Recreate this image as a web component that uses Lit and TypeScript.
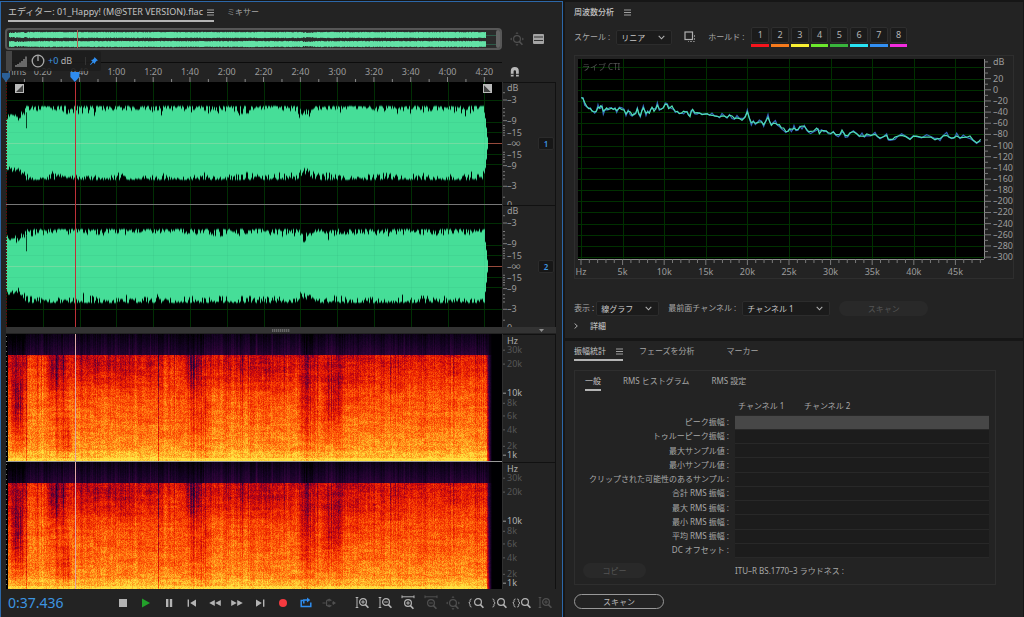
import { LitElement, html, svg, css } from "lit";
import { customElement, property } from "lit/decorators.js";
import { classMap } from "lit/directives/class-map.js";
import { styleMap } from "lit/directives/style-map.js";

type Painter = (c: CanvasRenderingContext2D, w: number, h: number) => void;

/* Repeatable noise, so that a redraw gives the same track. */
const noise = (a: number, b = 0): number => {
  let n = (Math.imul(a | 0, 374761393) + Math.imul(b | 0, 668265263)) | 0;
  n = Math.imul(n ^ (n >>> 13), 1274126177);
  return ((n ^ (n >>> 16)) >>> 0) / 4294967295;
};
const smooth = (x: number, seed: number): number => {
  const i = Math.floor(x);
  const f = x - i;
  const k = f * f * (3 - 2 * f);
  return noise(i, seed) * (1 - k) + noise(i + 1, seed) * k;
};
const bump = (x: number, from: number, to: number, soft = 3): number =>
  Math.max(0, Math.min(1, (x - from) / soft, (to - x) / soft));

const VIEW_SECONDS = 269.6;
const TRACK_END = 261.8;
const PLAYHEAD = 37.436;
const MINOR = 10;

/* ---------- waveform ---------- */

const envelope = (sec: number, seed: number): number => {
  const x = (sec / VIEW_SECONDS) * 496;
  const loose = 0.05 + 0.09 * smooth(x / 14, seed + 2);
  let a = 0.61 - loose * Math.pow(noise(Math.floor(x), seed), 2);
  if (noise(Math.floor(x), seed + 9) > 0.93) a -= 0.06;
  if (x < 19) a = 0.5 - 0.11 * noise(Math.floor(x), seed) + (x > 14 ? 0.05 : 0) - bump(x, 9, 15) * 0.05;
  a -= bump(x, 290, 310, 8) * (0.04 + 0.1 * noise(Math.floor(x), seed + 4));
  if (sec > TRACK_END - 1.6) a *= Math.max(0, (TRACK_END - sec) / 1.6) * 0.8;
  return a;
};

const LEVELS = [0, 0.175, 0.35, 0.7];

const paintWave: Painter = (c, w, h) => {
  c.fillStyle = "#000";
  c.fillRect(0, 0, w, h);
  const half = h / 2;
  for (let t = 0; t < 2; t++) {
    const mid = Math.round(half * t + half / 2);
    const px = (s: number) => Math.round((s / VIEW_SECONDS) * w);
    const grid = () => {
      for (let s = 0; s < VIEW_SECONDS; s += 20) c.fillRect(px(s), Math.round(half * t), 1, half);
      for (const l of LEVELS)
        for (const d of [-1, 1]) c.fillRect(0, mid + Math.round((d * l * half) / 2), w, 1);
    };
    c.fillStyle = "#002b00";
    grid();
    for (let x = 0; x < w; x++) {
      const s = (x / w) * VIEW_SECONDS;
      if (s > TRACK_END) break;
      const up = envelope(s, 11 + t) * (half / 2);
      const dn = envelope(s, 31 + t) * (half / 2);
      c.fillStyle = "#46de98";
      c.fillRect(x, mid - up, 1, up + dn);
      c.fillStyle = "rgba(0,60,35,0.45)";
      c.fillRect(x, mid - up - 1, 1, 2);
      c.fillRect(x, mid + dn - 1, 1, 2);
    }
    c.fillStyle = "rgba(20,110,60,0.06)";
    grid();
    c.fillStyle = "rgba(190,240,190,0.4)";
    c.fillRect(0, mid, px(TRACK_END), 1);
    c.fillStyle = "#984a3c";
    c.fillRect(px(TRACK_END), mid, w, 1);
    c.fillStyle = "#0b3f25";
    c.fillRect(20, mid - half * 0.25, 1, half * 0.13);
  }
  c.fillStyle = "#777";
  c.fillRect(0, Math.round(half) - 1, w, 1);
  c.fillStyle = "#c03038";
  c.fillRect(Math.round((PLAYHEAD / VIEW_SECONDS) * w), 0, 1, h);
  c.fillStyle = "#5a0c0c";
  for (let y = 0; y < h; y += 3) c.fillRect(0, y, 1, 2);
};

/* Fade-in and fade-out handle. */
const fadeHandle = (out: boolean) => html`<svg class="fade" viewBox="0 0 9 9">
  <rect width="9" height="9" fill="#b9b9b9" />
  <path d=${out ? "M1 1V8H8Z" : "M1 8V1H8Z"} fill=${out ? "#444" : "#b9b9b9"} />
  <path d=${out ? "M1 1H8V8Z" : "M1 8H8V1Z"} fill=${out ? "#b9b9b9" : "#444"} />
</svg>`;

const paintOverview: Painter = (c, w, h) => {
  for (let t = 0; t < 2; t++) {
    const mid = Math.round(h * (t ? 0.78 : 0.25));
    for (let x = 0; x < w; x++) {
      const s = (x / w) * VIEW_SECONDS;
      if (s > TRACK_END + 2) {
        c.fillStyle = "#2d5a48";
        c.fillRect(x, mid, 1, 1);
        continue;
      }
      const quiet = x < 18 || (x > 292 && x < 306);
      const a = quiet ? 2 + noise(x, t) : 2.6 + noise(x, t) * 0.6;
      c.fillStyle = "#63e2a6";
      c.fillRect(x, mid - a, 1, a * 2);
    }
  }
  c.fillStyle = "#b5604f";
  c.fillRect(Math.round((PLAYHEAD / VIEW_SECONDS) * w), 0, 1, h);
};

/* ---------- spectrogram ---------- */

const RAMP: [number, number, number, number][] = [
  [0, 0, 0, 2],
  [0.14, 20, 2, 34],
  [0.28, 52, 4, 62],
  [0.4, 122, 0, 44],
  [0.52, 196, 6, 14],
  [0.64, 240, 42, 0],
  [0.76, 255, 98, 10],
  [0.87, 255, 160, 32],
  [1, 255, 226, 64],
];
const ramp = (v: number): [number, number, number] => {
  const t = Math.max(0, Math.min(1, v));
  let i = 1;
  while (i < RAMP.length - 1 && RAMP[i][0] < t) i++;
  const a = RAMP[i - 1];
  const b = RAMP[i];
  const k = (t - a[0]) / (b[0] - a[0]);
  return [a[1] + (b[1] - a[1]) * k, a[2] + (b[2] - a[2]) * k, a[3] + (b[3] - a[3]) * k];
};

/* Quiet passages: from, to, depth, centre height, spread. */
const DIPS: [number, number, number, number, number][] = [
  [1, 20, 0.17, 0.42, 0.4],
  [6, 18, 0.1, 0.5, 0.25],
  [40, 62, 0.17, 0.1, 0.3],
  [46, 68, 0.12, 0.78, 0.24],
  [60, 135, 0.08, 0.12, 0.2],
  [135, 156, 0.06, 0.12, 0.2],
  [178, 198, 0.22, 0.08, 0.26],
  [180, 206, 0.1, 0.65, 0.4],
  [198, 290, 0.07, 0.12, 0.2],
  [290, 312, 0.15, 0.4, 0.5],
  [314, 337, 0.13, 0.45, 0.36],
  [318, 372, 0.06, 0.2, 0.35],
  [372, 400, 0.05, 0.15, 0.2],
];

const spectroPainter =
  (track: number): Painter =>
  (c, w, h) => {
    const img = c.createImageData(w, h);
    for (let px = 0; px < w; px++) {
      const x = (px / w) * 496;
      const u = Math.round(x);
      const col = (noise(u, 71) - 0.5) * 0.1 + (smooth(x / 5, 5) - 0.5) * 0.08;
      const streak = noise(u, 17) > 0.93 ? 0.07 : 0;
      for (let y = 0; y < h; y++) {
        const d = y / h;
        let v: number;
        const grain = noise(u * 3 + 1, y * 5 + track * 997) - 0.5;
        if (d < 0.163) {
          v = 0.08 + d * 0.9 + col * 0.9 + streak * 0.7 + grain * 0.04;
          v -= bump(x, 0, 20) * 0.1 + bump(x, 178, 200) * 0.07 + bump(x, 294, 308) * 0.1;
          v = Math.max(v, 0);
        } else {
          const e = (d - 0.163) / 0.837;
          v = 0.565 + 0.13 * Math.pow(Math.min(1, e * 2.5), 0.8) + 0.2 * e * e + (e > 0.9 ? 0.04 : 0);
          v += col * (1 - e * 0.5) - streak * (1 - e) * 1.4;
          v += grain * 0.15 + (smooth(y / 2.2, 40 + Math.floor(x / 22)) - 0.5) * 0.07;
          v += (smooth(x / 4 + 50 * Math.floor(y / 7), 90) - 0.5) * 0.05;
          if (track) v -= 0.015;
          for (const [from, to, depth, at, spread] of DIPS) {
            if (x < from || x > to) continue;
            const g = (e - at) / spread;
            v -= depth * bump(x, from, to, 6) * Math.exp(-g * g) * (0.4 + 1.1 * noise(u, 88));
          }
          if (x > 20 && x < 41) v += 0.08 * (1 - e);
          if (x > 156 && x < 178) v += 0.06 * (1 - e);
          if (e > 0.97) v += 0.08;
        }
        if (u === 20 || u === 152) v -= d < 0.163 ? 0.03 : 0.2;
        if (x > 480.5) v = x > 485 ? 0 : v * (0.75 - (x - 480.5) * 0.15);
        if (x < 1.5) v = 0;
        const [r, g, b] = ramp(v);
        const i = (y * w + px) * 4;
        img.data[i] = r;
        img.data[i + 1] = g;
        img.data[i + 2] = b;
        img.data[i + 3] = 255;
      }
    }
    c.putImageData(img, 0, 0);
    c.fillStyle = "#e2a8a8";
    c.fillRect(Math.round((PLAYHEAD / VIEW_SECONDS) * w), 0, 1, h);
    c.fillStyle = "#777";
    for (let y = 2; y < h; y += 5) c.fillRect(0, y, 1, 1);
  };

/* ---------- frequency curve ---------- */

/* Curve samples as flat x, y pairs in a plot 1218 wide and 597 high. */
const CURVE_LOW = [
  10, 115, 20, 130, 32, 148, 42, 155, 50, 158, 60, 144, 68, 140, 76, 156, 86, 146, 94, 150, 106, 150, 116, 154, 132,
  151, 144, 164, 157, 158, 168, 166, 178, 148, 187, 170, 196, 146, 204, 162, 214, 162, 222, 144, 228, 156, 238, 138,
  250, 150, 262, 135, 272, 148, 282, 140, 292, 156, 304, 163, 317, 156, 327, 158, 336, 172, 344, 150, 357, 160, 372,
  166, 387, 164, 402, 168, 417, 171, 432, 170, 447, 175, 462, 170, 477, 176, 492, 183, 502, 173, 508, 158, 520, 190,
  532, 192, 544, 188, 557, 196, 570, 174, 580, 198, 592, 192, 604, 196, 617, 206, 630, 216,
];
const CURVE_HIGH = [
  640, 209, 648, 206, 660, 210, 672, 200, 686, 210, 698, 216, 716, 206, 724, 223, 738, 214, 751, 220, 766, 218, 781,
  226, 792, 212, 802, 228, 816, 220, 836, 223, 852, 230, 866, 224, 891, 225, 906, 236, 926, 228, 936, 240, 951, 233,
  971, 228, 996, 240, 1016, 230, 1046, 233, 1071, 241, 1086, 238, 1106, 228, 1121, 236, 1136, 230, 1156, 234, 1176,
  230, 1196, 250, 1208, 240,
];
const CURVE = [...CURVE_LOW, ...CURVE_HIGH];
const MAX_KHZ = 48.8;
/* One grid column covers 5 kHz. */
const freqPos = (column: number) => (column * 124.8 + 9) / 1218;
const DB_TOP = 55.2;
const DB_SPAN = 358.6;
const dbPos = (db: number) => (DB_TOP - db) / DB_SPAN;

const paintFrequency: Painter = (c, w, h) => {
  c.fillStyle = "#000";
  c.fillRect(0, 0, w, h);
  c.fillStyle = "#003000";
  for (let column = 0; column < 10; column++) c.fillRect(Math.round(freqPos(column) * w), 0, 1, h);
  for (let db = 40; db >= -300; db -= 20) c.fillRect(0, Math.round(dbPos(db) * h), w, 1);
  const line = (colour: string, wobble: number) => {
    c.beginPath();
    c.strokeStyle = colour;
    c.lineWidth = 1.2;
    for (let i = 0; i < CURVE.length; i += 2) {
      const j = (noise(i, 3) - 0.5) * wobble;
      const x = (CURVE[i] / 1218) * w;
      const y = ((CURVE[i + 1] + j) / 597) * h;
      i ? c.lineTo(x, y) : c.moveTo(x, y);
      if (i + 2 < CURVE.length) {
        const mx = ((CURVE[i] + CURVE[i + 2]) / 2436) * w;
        const my = ((CURVE[i + 1] + CURVE[i + 3]) / 1194) * h;
        c.lineTo(mx, my + (noise(i, 6) - 0.5) * (wobble ? 6 : 4));
      }
    }
    c.stroke();
  };
  line("#3568bd", 18);
  line("#4fe0b4", 0);
};

@customElement("plot-canvas")
class PlotCanvas extends LitElement {
  @property({ attribute: false }) paint: Painter = () => {};
  private watcher = new ResizeObserver(() => this.draw());
  static styles = css`
    :host {
      display: block;
      contain: size;
      min-width: 0;
      min-height: 0;
    }
    canvas {
      display: block;
      width: 100%;
      height: 100%;
    }
  `;
  render() {
    return html`<canvas></canvas>`;
  }
  firstUpdated() {
    this.watcher.observe(this);
    this.draw();
  }
  disconnectedCallback() {
    super.disconnectedCallback();
    this.watcher.disconnect();
  }
  private draw() {
    const canvas = this.renderRoot.querySelector("canvas");
    const w = this.clientWidth;
    const h = this.clientHeight;
    if (!canvas || !w || !h) return;
    canvas.width = w;
    canvas.height = h;
    const c = canvas.getContext("2d");
    if (c) this.paint(c, w, h);
  }
}

const base = css`
  * {
    box-sizing: border-box;
  }
  button,
  select {
    font: inherit;
    color: inherit;
    margin: 0;
    padding: 0;
    border: 0;
    background: none;
  }
  svg {
    display: block;
  }
  .tabs {
    display: flex;
    align-items: flex-start;
  }
  .tab {
    display: flex;
    align-items: center;
    gap: 10px;
    height: 20px;
    padding-top: 2px;
    border-bottom: 2px solid transparent;
    white-space: nowrap;
    color: #a6a6a6;
  }
  .tab.on {
    border-color: #b4b4b4;
    color: #c4c4c4;
  }
  .menu {
    width: 7px;
    height: 7px;
  }
`;

const menuIcon = html`<svg class="menu" viewBox="0 0 7 7">
  <path d="M0 1h7M0 3.5h7M0 6h7" stroke="#a0a0a0" stroke-width="1" />
</svg>`;

/* ---------- editor ---------- */

const lens = (sign: string, x = 8, y = 6) => svg`
  <circle cx=${x} cy=${y} r="3.4" fill="none" stroke="currentColor" stroke-width="1.2" />
  <path d=${`M${x + 2.4} ${y + 2.6}l3 3.2`} stroke="currentColor" stroke-width="1.6" />
  ${sign ? svg`<path d=${`M${x - 1.8} ${y}h3.6` + (sign === "+" ? `M${x} ${y - 1.8}v3.6` : "")} stroke="currentColor" stroke-width="1" />` : ""}`;
const vBar = svg`<path d="M2 1.5v10M.7 1.5h2.6M.7 11.5h2.6" stroke="currentColor" stroke-width="1" fill="none" />`;
const hBar = svg`<path d="M1 .8h12M1 -.6v2.8M13 -.6v2.8" stroke="currentColor" stroke-width="1" fill="none" />`;

interface Tool {
  name: string;
  art: unknown;
  tone?: string;
}

const TRANSPORT: Tool[] = [
  { name: "停止", art: svg`<path d="M3 3h8v8H3z" fill="currentColor" />` },
  { name: "再生", tone: "play", art: svg`<path d="M3 2.5l8 4.5-8 4.5z" fill="currentColor" />` },
  { name: "一時停止", art: svg`<path d="M4 3h2.4v8H4zM7.8 3h2.4v8H7.8z" fill="currentColor" />` },
  { name: "前へ", art: svg`<path d="M2.6 3.4h1.4v7.4H2.6zM11 3.4v7.4L5.2 7.1z" fill="currentColor" />` },
  { name: "巻き戻し", art: svg`<path d="M6.8 4v6L1.2 7zM12.8 4v6L7.2 7z" fill="currentColor" />` },
  { name: "早送り", art: svg`<path d="M1.2 4v6l5.6-3zM7.2 4v6l5.6-3z" fill="currentColor" />` },
  { name: "次へ", art: svg`<path d="M10 3.4h1.4v7.4H10zM3 3.4v7.4l5.8-3.7z" fill="currentColor" />` },
  { name: "録音", tone: "rec", art: svg`<circle cx="7" cy="7" r="4" fill="currentColor" />` },
  {
    name: "ループ再生",
    tone: "loop",
    art: svg`<path d="M4 4.6H2.2v5.8h9.6V6.6M4.8 7.6V4h4" fill="none" stroke="currentColor" stroke-width="1.5" /><path d="M8 1.4l3.2 2.6L8 6.6z" fill="currentColor" />`,
  },
  {
    name: "選択範囲をスキップ",
    tone: "off",
    art: svg`<path d="M.5 7h3.2M10 7h3.4M4.6 4.6L7 3.4v2M4.6 4.6v4.8L7 10.6v-2M9.4 4.6L7 3.4M9.4 9.4L7 10.6" fill="none" stroke="currentColor" stroke-width="1.2" /><path d="M10.8 4.8L13.6 7l-2.8 2.2z" fill="currentColor" />`,
  },
];
const ZOOMS: Tool[] = [
  { name: "振幅ズームイン", art: svg`${vBar}${lens("+")}` },
  { name: "振幅ズームアウト", art: svg`${vBar}${lens("-")}` },
  { name: "時間ズームイン", art: svg`${hBar}${lens("+", 7, 7)}` },
  { name: "時間ズームアウト", tone: "off", art: svg`${hBar}${lens("-", 7, 7)}` },
  {
    name: "全体表示",
    tone: "off",
    art: svg`${lens("", 7, 7)}<path d="M5.5 1.8L7 0l1.5 1.8zM1.8 5.5L0 7l1.8 1.5zM12.2 5.5L14 7l-1.8 1.5zM5.5 12.2L7 14l1.5-1.8z" fill="currentColor" />`,
  },
  {
    name: "イン点ズーム",
    art: svg`<path d="M2.5 3Q1 3 1 4.5v1.3L-.2 7 1 8.2v1.3q0 1.5 1.5 1.5" fill="none" stroke="currentColor" />${lens("", 9)}`,
  },
  {
    name: "アウト点ズーム",
    art: svg`<path d="M.5 3Q2 3 2 4.5v1.3L3.2 7 2 8.2v1.3q0 1.5-1.5 1.5" fill="none" stroke="currentColor" />${lens("", 9)}`,
  },
  {
    name: "選択範囲ズーム",
    art: svg`<path d="M.5 3Q-1 3-1 4.5v1.3L-2.2 7-1 8.2v1.3q0 1.5 1.5 1.5M2.2 3Q3.7 3 3.7 4.5v1.3L4.9 7 3.7 8.2v1.3q0 1.5-1.5 1.5" fill="none" stroke="currentColor" />${lens("", 10)}`,
  },
  { name: "ズームリセット", tone: "off", art: svg`${vBar}${lens("+")}` },
];

const WAVE_SCALE: [string, number][] = [
  ["dB", 4], ["–3", 14], ["–9", 31], ["–15", 41], ["–∞", 50], ["–15", 59], ["–9", 68], ["–3", 85], ["0", 100],
];
const HZ_SCALE: [string, number, boolean][] = [
  ["Hz", 5, true], ["30k", 12, false], ["20k", 23, false], ["10k", 46, true], ["8k", 54, false],
  ["6k", 64, false], ["4k", 75, false], ["2k", 88, false], ["1k", 95, true],
];

@customElement("editor-panel")
class EditorPanel extends LitElement {
  static styles = [
    base,
    css`
      :host {
        display: flex;
        flex-direction: column;
        min-width: 0;
        margin-top: 1px;
        padding: 0 6px 0 5px;
        border: 1px solid #2c67a8;
        border-bottom: 0;
        background: #232323;
      }
      .tabs {
        gap: 13px;
        padding-left: 2px;
      }
      .tabs .on {
        gap: 4px;
        font-size: 9px;
      }
      .top {
        display: grid;
        grid-template-columns: minmax(0, 1fr) 54px;
        margin-top: 6px;
        margin-left: -1px;
      }
      .overview {
        display: grid;
        grid-template-columns: 2px minmax(0, 1fr) 4px;
        height: 22px;
        background: #2b2b2b;
        border: 2px solid #575757;
        border-radius: 4px;
      }
      .grip {
        background: #636363;
        border-radius: 2px;
      }
      .tools {
        display: flex;
        align-items: center;
        gap: 8px;
        padding-left: 8px;
      }
      .small {
        width: 14px;
        height: 14px;
        overflow: visible;
      }
      .time {
        display: grid;
        grid-template-columns: minmax(0, 1fr) 54px;
        grid-template-rows: minmax(0, 1fr);
        height: 20px;
        margin-top: 12px;
        position: relative;
      }
      .ruler {
        width: 100%;
        height: 100%;
        overflow: visible;
        border-top: 1px solid #0c0c0c;
      }
      .side {
        display: flex;
        align-items: center;
        padding-left: 6px;
      }
      .axis {
        font: 9px "Noto Sans", "Noto Sans CJK JP", sans-serif;
        fill: #9c9c9c;
      }
      .hz {
        fill: #b0b0b0;
      }
      .hz.dim {
        fill: #565656;
      }
      .hud {
        position: absolute;
        left: 0;
        top: -11px;
        display: flex;
        align-items: center;
        height: 20px;
        gap: 3px;
        padding-right: 3px;
        background: rgba(29, 29, 29, 0.88);
        border-radius: 2px;
        color: #b0b0b0;
        font-size: 9px;
        white-space: nowrap;
      }
      .hud .handle {
        width: 6px;
        height: 100%;
        background: #454545;
      }
      .hud .gain {
        color: #3d95e0;
      }
      .hud .pin {
        margin-left: 10px;
        padding-left: 4px;
        border-left: 1px solid #333;
      }
      .wave {
        display: grid;
        grid-template-columns: minmax(0, 1fr) 54px;
        flex: 245 1 0;
        min-height: 0;
        position: relative;
      }
      .spectro {
        display: grid;
        grid-template-columns: minmax(0, 1fr) 54px;
        flex: 255 1 0;
        min-height: 0;
        margin-top: 1px;
      }
      .fades {
        position: absolute;
        top: 2px;
        left: 9px;
        right: 64px;
        display: flex;
        justify-content: space-between;
      }
      .fade {
        width: 9px;
        height: 9px;
      }
      .scales {
        display: grid;
        grid-template-rows: repeat(2, minmax(0, 1fr));
        border-left: 1px solid #303030;
        border-right: 1px solid #111;
        min-height: 0;
      }
      .scale {
        display: grid;
        grid-template-columns: minmax(0, 1fr) 17px;
        grid-template-rows: minmax(0, 1fr);
        align-items: center;
        min-height: 0;
        border-top: 1px solid #111;
        overflow: hidden;
      }
      .scale svg {
        width: 100%;
        height: 100%;
      }
      .chan {
        width: 16px;
        height: 13px;
        background: #171717;
        border: 1px solid #2b2b2b;
        border-radius: 2px;
        color: #3d95e0;
        font-size: 8px;
        line-height: 11px;
        font-weight: 600;
      }
      .bands {
        display: grid;
        grid-template-rows: repeat(2, minmax(0, 1fr));
        gap: 1px;
        background: #999;
      }
      .splitter {
        display: grid;
        grid-template-columns: 1fr 18px 1fr;
        align-items: center;
        height: 6px;
        background: #333;
      }
      .ridge {
        grid-column: 2;
        height: 3px;
        background: repeating-linear-gradient(90deg, #666 0 1px, #444 1px 2px);
      }
      .splitter svg {
        width: 5px;
        height: 3px;
        margin-left: auto;
        margin-right: 12px;
      }
      .bar {
        display: flex;
        align-items: center;
        height: 28px;
      }
      .clock {
        width: 106px;
        padding-left: 2px;
        color: #3d95e0;
        font-size: 14px;
        line-height: 20px;
      }
      .group {
        display: flex;
        flex: 10 1 0;
      }
      .group.zoom {
        flex: 9 1 0;
        margin-left: 11px;
      }
      .tool {
        display: grid;
        place-items: center;
        flex: 1 1 0;
        height: 20px;
        color: #b4b4b4;
      }
      .tool svg {
        width: 14px;
        height: 14px;
        overflow: visible;
      }
      .tool.play {
        color: #22a02a;
      }
      .tool.rec {
        color: #f53a3f;
      }
      .tool.loop {
        color: #2f8ef0;
      }
      .tool.off {
        color: #505050;
      }
    `,
  ];

  private tool(t: Tool) {
    return html`<button class="tool ${t.tone ?? ""}" aria-label=${t.name}>
      <svg viewBox="0 0 14 14">${t.art}</svg>
    </button>`;
  }

  private ruler() {
    const pct = (s: number) => `${(s / VIEW_SECONDS) * 100}%`;
    const ticks: number[] = [];
    for (let s = 0; s < VIEW_SECONDS; s += MINOR) ticks.push(s);
    return html`<svg class="ruler">
      ${ticks.map(
        (s) => svg`<line x1=${pct(s)} x2=${pct(s)} y1=${s % 20 ? 16 : 14} y2="19" stroke="#8a8a8a" stroke-width="1" />`,
      )}
      <text class="axis" x="2" y="12">hms</text>
      ${ticks
        .filter((s) => s && s % 20 === 0)
        .map(
          (s) => svg`<text class="axis" x=${pct(s)} y="12" text-anchor="middle"
            >${Math.floor(s / 60)}:${String(s % 60).padStart(2, "0")}</text>`,
        )}
      <svg x="0" y="9" overflow="visible"><path d="M-4 1h8v4L0 10-4 5z" fill="#2b5f96" /></svg>
      <svg x=${pct(PLAYHEAD)} y="9" overflow="visible"><path d="M-4.5 0h9v5L0 10-4.5 5z" fill="#2f8cf0" /></svg>
    </svg>`;
  }

  private waveScale(n: number) {
    const ticks = [8, 14, 21, 24, 27, 31, 35, 37, 39, 41, 43, 57, 59, 61, 63, 65, 68, 73, 76, 79, 85, 94];
    return html`<div class="scale">
      <svg>
        ${ticks.map(
          (t) => svg`<line x1="0" x2=${[14, 31, 68, 85].includes(t) ? 4 : 2} y1="${t}%" y2="${t}%" stroke="#7c7c7c" />`,
        )}
        ${WAVE_SCALE.map(([t, y]) => svg`<text class="axis" x="4" y="${y}%" dy="3">${t}</text>`)}
      </svg>
      <button class="chan" aria-label="チャンネル ${n}">${n}</button>
    </div>`;
  }

  private hzScale() {
    return html`<div class="scale">
      <svg>
        ${HZ_SCALE.slice(1).map(
          ([, y, strong]) => svg`<line x1="0" x2=${strong ? 3 : 2} y1="${y}%" y2="${y}%" stroke=${strong ? "#999" : "#5e5e5e"} />`,
        )}
        ${HZ_SCALE.map(
          ([t, y, strong]) => svg`<text class=${strong ? "axis hz" : "axis hz dim"} x="4" y="${y}%" dy="3">${t}</text>`,
        )}
      </svg>
    </div>`;
  }

  render() {
    return html`
      <div class="tabs">
        <button class="tab on">エディター: 01_Happy! (M@STER VERSION).flac ${menuIcon}</button>
        <button class="tab">ミキサー</button>
      </div>
      <div class="top">
        <div class="overview">
          <span></span>
          <plot-canvas .paint=${paintOverview}></plot-canvas>
          <span class="grip"></span>
        </div>
        <div class="tools">
          <button class="off" aria-label="全体表示">
            <svg class="small" viewBox="0 0 14 14" color="#505050">${ZOOMS[4].art}</svg>
          </button>
          <button aria-label="トラック表示">
            <svg class="small" viewBox="0 0 14 14">
              <rect x="1" y="2" width="11" height="10" rx="1" fill="#a4a4a4" />
              <path d="M2 5h9M2 8.5h9" stroke="#333" stroke-width="1" />
            </svg>
          </button>
        </div>
      </div>
      <div class="time">
        ${this.ruler()}
        <div class="side">
          <svg class="small" viewBox="0 0 14 14">
            <path d="M2.8 11.5V6a4 4 0 0 1 8 0v5.5H8V6.5a1.2 1.2 0 0 0-2.4 0v5z" fill="#b8b8b8" />
            <path d="M2.5 9.3h3.3M7.7 9.3h3.3" stroke="#232323" />
          </svg>
        </div>
        <div class="hud">
          <span class="handle"></span>
          <svg width="13" height="12" viewBox="0 0 13 12">
            <path d="M1 12v-2M3 12V9M5 12V7.5M7 12V6M9 12V4M11 12V1.5" stroke="#7c7c7c" stroke-width="1.6" />
          </svg>
          <svg width="14" height="14" viewBox="0 0 14 14">
            <circle cx="7" cy="7" r="5.8" fill="none" stroke="#a8a8a8" stroke-width="1.3" />
            <path d="M7 1v6" stroke="#a8a8a8" stroke-width="1.3" />
          </svg>
          <span><span class="gain">+0</span> dB</span>
          <button class="pin" aria-label="HUD を固定">
            <svg width="8" height="8" viewBox="0 0 8 8">
              <path d="M4.5 0L8 3.5 6.8 3.8 5.2 5.4 5 7 3.2 5.5.6 8 0 7.4 2.5 4.8 1 3 2.6 2.8 4.2 1.2z" fill="#2f8ef0" />
            </svg>
          </button>
        </div>
      </div>
      <div class="wave">
        <plot-canvas .paint=${paintWave}></plot-canvas>
        <div class="scales">${this.waveScale(1)}${this.waveScale(2)}</div>
        <div class="fades">${fadeHandle(false)}${fadeHandle(true)}</div>
      </div>
      <div class="splitter">
        <span class="ridge"></span>
        <svg viewBox="0 0 5 3"><path d="M0 0h5L2.5 3z" fill="#909090" /></svg>
      </div>
      <div class="spectro">
        <div class="bands">
          <plot-canvas .paint=${spectroPainter(0)}></plot-canvas>
          <plot-canvas .paint=${spectroPainter(1)}></plot-canvas>
        </div>
        <div class="scales">${this.hzScale()}${this.hzScale()}</div>
      </div>
      <div class="bar">
        <div class="clock">0:37.436</div>
        <div class="group">${TRANSPORT.map((t) => this.tool(t))}</div>
        <div class="group zoom">${ZOOMS.map((t) => this.tool(t))}</div>
      </div>
    `;
  }
}

/* ---------- shared form pieces ---------- */

const form = css`
  .pick {
    display: grid;
    grid-template-columns: minmax(0, 1fr) 13px;
    align-items: center;
    height: 15px;
    background: #1b1b1b;
    border: 1px solid #2c2c2c;
    border-radius: 2px;
    color: #c8c8c8;
  }
  .pick select {
    grid-column: 1 / 3;
    grid-row: 1;
    appearance: none;
    height: 13px;
    line-height: 13px;
    padding-left: 4px;
  }
  .pick svg {
    grid-column: 2;
    grid-row: 1;
    width: 7px;
    height: 5px;
    pointer-events: none;
  }
  .pill {
    height: 15px;
    border-radius: 8px;
    background: #292929;
    color: #555;
    line-height: 15px;
  }
`;

const pick = (id: string, cls: string, value: string) => html`<div class="pick ${cls}">
  <select id=${id}>
    <option>${value}</option>
  </select>
  <svg viewBox="0 0 7 5"><path d="M.7.8L3.5 3.8 6.3.8" fill="none" stroke="#b0b0b0" stroke-width="1.1" /></svg>
</div>`;

/* ---------- frequency analysis ---------- */

const HOLD = ["#f5141c", "#f77a1c", "#f8f032", "#6ce82c", "#38b53c", "#28e4f4", "#3290f4", "#f42ce0"];

@customElement("frequency-panel")
class FrequencyPanel extends LitElement {
  static styles = [
    base,
    form,
    css`
      :host {
        display: flex;
        flex-direction: column;
        padding: 0 9px;
        background: #232323;
      }
      .tab.plain {
        color: #c4c4c4;
        font-weight: 500;
      }
      .row {
        display: flex;
        align-items: center;
        color: #a8a8a8;
        white-space: nowrap;
      }
      .options {
        height: 20px;
        margin-top: 5px;
      }
      .scale-pick {
        width: 56px;
        margin-left: 6px;
      }
      .copy {
        width: 12px;
        height: 12px;
        margin: 0 12px;
      }
      .holds {
        display: grid;
        grid-template-columns: repeat(8, minmax(0, 1fr));
        gap: 2px;
        width: 156px;
        margin-left: 7px;
      }
      .hold {
        display: grid;
        gap: 1px;
        color: #b4b4b4;
        line-height: 13px;
      }
      .num {
        background: #1b1b1b;
        border: 1px solid #2e2e2e;
        border-radius: 2px;
        height: 16px;
        line-height: 14px;
        font-size: 9px;
      }
      .swatch {
        height: 3px;
      }
      .chart {
        display: grid;
        grid-template-columns: minmax(0, 1fr) 29px;
        grid-template-rows: minmax(0, 1fr) 19px;
        flex: 1 1 223px;
        min-height: 120px;
        margin-top: 8px;
        padding: 3px 0 0 3px;
        border: 1px solid #2e2e2e;
      }
      .plot {
        display: grid;
        position: relative;
      }
      .live {
        position: absolute;
        left: 4px;
        top: 2px;
        color: #555;
        font-size: 8px;
        line-height: 12px;
      }
      .axis {
        width: 100%;
        height: 100%;
        min-width: 0;
        min-height: 0;
        overflow: visible;
        font: 9px "Noto Sans", "Noto Sans CJK JP", sans-serif;
        fill: #9c9c9c;
      }
      .holder {
        contain: size;
      }
      .display {
        height: 16px;
        margin-top: 21px;
      }
      .graph-pick {
        width: 63px;
        margin: 0 9px 0 2px;
      }
      .channel-pick {
        width: 88px;
        margin: 0 9px 0 6px;
      }
      .display .pill {
        width: 89px;
      }
      .details {
        display: flex;
        align-items: center;
        gap: 12px;
        height: 20px;
        margin-bottom: 2px;
        color: #b8b8b8;
        font-weight: 500;
      }
      .details svg {
        width: 4px;
        height: 6px;
      }
    `,
  ];

  private dbAxis() {
    const labels: number[] = [];
    for (let db = 20; db >= -300; db -= 20) labels.push(db);
    const ticks: number[] = [];
    for (let db = 50; db >= -300; db -= 10) ticks.push(db);
    const y = (db: number) => `${dbPos(db) * 100}%`;
    return html`<svg class="axis">
      <line x1="0.5" x2="0.5" y1="0" y2="100%" stroke="#8c8c8c" />
      ${ticks.map((t) => svg`<line x1="0" x2=${t % 20 ? 4 : 7} y1=${y(t)} y2=${y(t)} stroke="#7a7a7a" />`)}
      <text x="9" y="6">dB</text>
      ${labels.map((t) => svg`<text x="9" y=${y(t)} dy="3">${String(t).replace("-", "–")}</text>`)}
    </svg>`;
  }

  private hzAxis() {
    const x = (k: number) => `${freqPos(k / 5) * 100}%`;
    const ticks = Array.from({ length: Math.floor(MAX_KHZ) + 1 }, (_, k) => k);
    return html`<svg class="axis">
      <line x1="0" x2="100%" y1="0.5" y2="0.5" stroke="#8c8c8c" />
      ${ticks.map((k) => svg`<line x1=${x(k)} x2=${x(k)} y1="0" y2=${k % 5 ? 4 : 6} stroke="#7a7a7a" />`)}
      ${ticks
        .filter((k) => k % 5 === 0)
        .map((k) => svg`<text x=${x(k)} y="16" text-anchor="middle">${k ? `${k}k` : "Hz"}</text>`)}
    </svg>`;
  }

  render() {
    return html`
      <div class="tabs"><button class="tab plain">周波数分析 ${menuIcon}</button></div>
      <div class="row options">
        <label for="scale">スケール :</label>
        ${pick("scale", "scale-pick", "リニア")}
        <button class="copy" aria-label="すべてコピー">
          <svg viewBox="0 0 12 12">
            <rect x="1" y="1" width="7.5" height="7.5" fill="none" stroke="#b0b0b0" stroke-width="1.2" />
            <path d="M10.5 4v6.5H4" fill="none" stroke="#808080" stroke-dasharray="2 1" />
          </svg>
        </button>
        <span>ホールド :</span>
        <div class="holds">
          ${HOLD.map(
            (colour, i) => html`<div class="hold">
              <button class="num" aria-label="ホールド ${i + 1}">${i + 1}</button>
              <span class="swatch" style=${styleMap({ background: colour })}></span>
            </div>`,
          )}
        </div>
      </div>
      <div class="chart">
        <div class="plot">
          <plot-canvas .paint=${paintFrequency}></plot-canvas>
          <span class="live">ライブ CTI</span>
        </div>
        <div class="holder">${this.dbAxis()}</div>
        <div class="holder">${this.hzAxis()}</div>
      </div>
      <div class="row display">
        <label for="graph">表示 :</label>
        ${pick("graph", "graph-pick", "線グラフ")}
        <label for="channel">最前面チャンネル :</label>
        ${pick("channel", "channel-pick", "チャンネル 1")}
        <button class="pill" disabled>スキャン</button>
      </div>
      <button class="details">
        <svg viewBox="0 0 4 6"><path d="M.6.5L3.3 3 .6 5.5" fill="none" stroke="#b0b0b0" /></svg>
        詳細
      </button>
    `;
  }
}

/* ---------- amplitude statistics ---------- */

const STATS = [
  "ピーク振幅 :",
  "トゥルーピーク振幅 :",
  "最大サンプル値 :",
  "最小サンプル値 :",
  "クリップされた可能性のあるサンプル :",
  "合計 RMS 振幅 :",
  "最大 RMS 振幅 :",
  "最小 RMS 振幅 :",
  "平均 RMS 振幅 :",
  "DC オフセット :",
];

@customElement("statistics-panel")
class StatisticsPanel extends LitElement {
  static styles = [
    base,
    form,
    css`
      :host {
        display: block;
        padding: 0 27px 8px 9px;
        background: #232323;
      }
      .outer {
        gap: 16px;
      }
      .outer .tab:nth-child(3) {
        margin-left: 16px;
      }
      .frame {
        margin-top: 9px;
        padding: 0 6px 6px 8px;
        border: 1px solid #2e2e2e;
      }
      .inner {
        gap: 22px;
        padding-left: 2px;
      }
      .stats {
        width: 100%;
        height: 160px;
        margin-top: 7px;
        border-collapse: collapse;
        table-layout: fixed;
        color: #a8a8a8;
      }
      .stats th,
      .stats td {
        padding: 0;
        font-weight: 400;
        line-height: 12px;
        white-space: nowrap;
      }
      .names {
        width: 152px;
      }
      .channel {
        width: 66px;
      }
      .stats thead th {
        height: 17px;
        padding-left: 3px;
        text-align: left;
      }
      .stats tbody th {
        padding-right: 6px;
        text-align: right;
      }
      .stats tbody td {
        background: #1c1c1c;
        border-top: 1px solid #282828;
        border-bottom: 1px solid #282828;
      }
      .stats tbody .current td {
        background: #474747;
      }
      .foot {
        display: grid;
        grid-template-columns: 63px minmax(0, 1fr);
        gap: 89px;
        align-items: center;
        margin-top: 5px;
        color: #a8a8a8;
      }
      .scan {
        width: 90px;
        height: 15px;
        margin-top: 9px;
        border: 1px solid #989898;
        border-radius: 8px;
        color: #b8b8b8;
        line-height: 13px;
      }
    `,
  ];

  render() {
    return html`
      <div class="tabs outer">
        <button class="tab on">振幅統計 ${menuIcon}</button>
        <button class="tab">フェーズを分析</button>
        <button class="tab">マーカー</button>
      </div>
      <div class="frame">
        <div class="tabs inner">
          <button class="tab on">一般</button>
          <button class="tab">RMS ヒストグラム</button>
          <button class="tab">RMS 設定</button>
        </div>
        <table class="stats">
          <colgroup>
            <col class="names" />
            <col class="channel" />
            <col class="channel" />
            <col />
          </colgroup>
          <thead>
            <tr>
              <td></td>
              <th>チャンネル 1</th>
              <th>チャンネル 2</th>
              <td></td>
            </tr>
          </thead>
          <tbody>
            ${STATS.map(
              (name, i) => html`<tr class=${classMap({ current: i === 0 })}>
                <th scope="row">${name}</th>
                <td></td>
                <td></td>
                <td></td>
              </tr>`,
            )}
          </tbody>
        </table>
        <div class="foot">
          <button class="pill" disabled>コピー</button>
          <span>ITU–R BS.1770–3 ラウドネス :</span>
        </div>
      </div>
      <button class="scan">スキャン</button>
    `;
  }
}

@customElement("app-root")
class AppRoot extends LitElement {
  static styles = css`
    :host {
      display: grid;
      grid-template-columns: minmax(0, 563fr) minmax(0, 458fr);
      column-gap: 2px;
      padding-right: 1px;
      box-sizing: border-box;
      height: 100vh;
      min-height: 520px;
      background: #161616;
      font: 8px/12px "Noto Sans", "Noto Sans CJK JP", sans-serif;
      color: #a8a8a8;
    }
    .right {
      display: flex;
      flex-direction: column;
      gap: 3px;
      min-width: 0;
      min-height: 0;
      padding-top: 2px;
    }
    frequency-panel {
      flex: 1 1 auto;
      min-height: 0;
    }
  `;
  render() {
    return html`
      <editor-panel></editor-panel>
      <div class="right">
        <frequency-panel></frequency-panel>
        <statistics-panel></statistics-panel>
      </div>
    `;
  }
}
